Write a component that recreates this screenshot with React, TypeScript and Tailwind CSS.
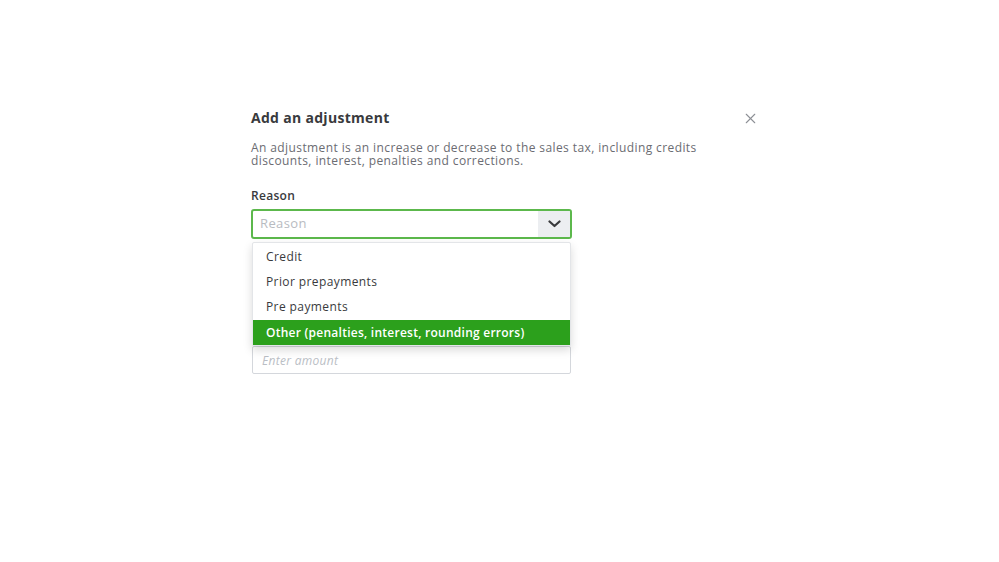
import { X } from 'lucide-react';

const options = ['Credit', 'Prior prepayments', 'Pre payments', 'Other (penalties, interest, rounding errors)'];

export default function App() {
  const selected = 3;

  return (
    <div
      className="w-full h-[562px] bg-white text-[#393a3d]"
      style={{ fontFamily: '"Open Sans", "Noto Sans", sans-serif' }}
    >
      <div className="ml-[251px] w-[506px] pt-[109px]">
        {/* Header */}
        <div className="flex items-center justify-between">
          <h2 className="text-[14px] leading-[18px] font-bold tracking-[0.3px]">Add an adjustment</h2>
          <button className="text-[#8d9096] -mr-[2px]">
            <X size={17} strokeWidth={1.5} />
          </button>
        </div>

        <p className="mt-[14px] text-[12px] leading-[13px] tracking-[0.4px] text-[#6b6c72] w-[470px]">
          An adjustment is an increase or decrease to the sales tax, including credits discounts, interest, penalties and
          corrections.
        </p>

        {/* Reason */}
        <label className="block mt-[21px] text-[12px] leading-[16px] font-semibold tracking-[0.3px]">Reason</label>
        <div className="relative mt-[5px] w-[321px]">
          <div className="flex h-[30px] rounded-[3px] border-2 border-[#5cb84c] overflow-hidden">
            <input
              readOnly
              placeholder="Reason"
              className="flex-1 min-w-0 px-[7px] text-[13px] tracking-[0.4px] outline-none placeholder:text-[#b8bbc1]"
            />
            <div className="w-[32px] bg-[#eceef1] flex items-center justify-center">
              <svg width="13" height="8" viewBox="0 0 13 8" fill="none">
                <path d="M1.5 1.5l5 4.5 5-4.5" stroke="#393a3d" strokeWidth="2.2" strokeLinecap="round" strokeLinejoin="round" />
              </svg>
            </div>
          </div>

          {/* Dropdown menu */}
          <ul className="absolute left-[1px] right-[1px] top-[33px] z-10 bg-white border border-[#e3e5e8] rounded-t-[2px] pt-[1px] shadow-[0_4px_10px_rgba(0,0,0,0.15)]">
            {options.map((o, i) => (
              <li
                key={o}
                className={
                  i === selected
                    ? 'h-[25px] px-[13px] mt-[1px] flex items-center text-[12px] tracking-[0.25px] font-semibold text-white bg-[#2ca01c]'
                    : 'h-[25px] px-[13px] flex items-center text-[12px] tracking-[0.4px] text-[#393a3d]'
                }
              >
                {o}
              </li>
            ))}
          </ul>
        </div>

        {/* Amount */}
        <input
          placeholder="Enter amount"
          className="block mt-[107px] ml-[1px] w-[319px] h-[28px] px-[9px] border border-[#d4d7dc] rounded-[2px] text-[12px] tracking-[0.3px] italic outline-none placeholder:text-[#babec5]"
        />
      </div>
    </div>
  );
}
